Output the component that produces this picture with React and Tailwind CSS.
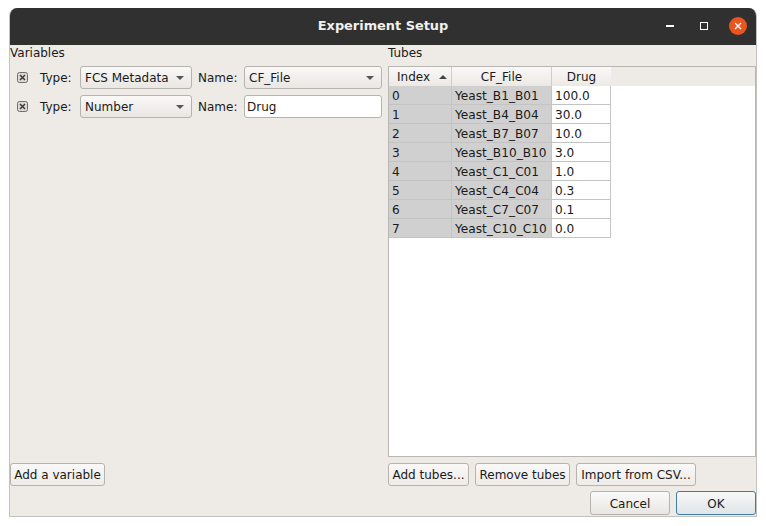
import React from "react";

const font = { fontFamily: '"DejaVu Sans", sans-serif' };

function Arrow() {
  return <span className="ml-auto mr-[6px] h-0 w-0 border-x-[4px] border-t-[4px] border-x-transparent border-t-[#555]" />;
}

function Combo({ w, children }) {
  return (
    <div className={`flex h-[23px] ${w} shrink-0 items-center rounded-[3px] border border-[#b5b3ae] bg-gradient-to-b from-[#faf9f8] to-[#e9e6e3] pl-[4px] pr-[1px] pt-[1px]`}>
      <span>{children}</span>
      <Arrow />
    </div>
  );
}

function Check() {
  return (
    <svg width="11" height="11" viewBox="0 0 11 11" className="ml-[7px] mr-[12px] shrink-0">
      <rect x="0.5" y="0.5" width="10" height="10" rx="2" fill="#dcdad6" stroke="#6f6d69" />
      <path d="M3 3 L8 8 M8 3 L3 8" stroke="#3a3a3a" strokeWidth="1.5" />
    </svg>
  );
}

function Btn({ w, children }) {
  return (
    <div className={`flex h-[23px] ${w} items-center justify-center rounded-[3px] border border-[#b5b3ae] bg-gradient-to-b from-[#faf9f8] to-[#eeebe8] pt-[1px]`}>
      {children}
    </div>
  );
}

const rows = [
  ["0", "Yeast_B1_B01", "100.0"],
  ["1", "Yeast_B4_B04", "30.0"],
  ["2", "Yeast_B7_B07", "10.0"],
  ["3", "Yeast_B10_B10", "3.0"],
  ["4", "Yeast_C1_C01", "1.0"],
  ["5", "Yeast_C4_C04", "0.3"],
  ["6", "Yeast_C7_C07", "0.1"],
  ["7", "Yeast_C10_C10", "0.0"],
];

function VarRow({ type, name, input }) {
  return (
    <div className="flex h-[23px] items-center">
      <Check />
      <span className="w-[40px] shrink-0 pt-[1px]">Type:</span>
      <Combo w="w-[112px]">{type}</Combo>
      <span className="ml-[6px] w-[46px] shrink-0 pt-[1px]">Name:</span>
      {input ? (
        <div className="flex h-[23px] w-[138px] items-center rounded-[3px] border border-[#b5b3ae] bg-white pl-[2px] pt-[1px]">{name}</div>
      ) : (
        <Combo w="w-[138px]">{name}</Combo>
      )}
    </div>
  );
}

export default function App() {
  return (
    <div className="h-[526px] w-[766px] overflow-hidden bg-white pl-[9px] pt-[8px] text-[12px] leading-none text-[#1a1a1a]" style={font}>
      <div className="flex h-[509px] w-[748px] flex-col overflow-hidden rounded-t-[8px] border-x border-b border-[#c4c2bf] bg-[#eeebe7]">
        <div className="relative flex h-[37px] shrink-0 items-center justify-center bg-[#303030]">
          <span className="text-[12.9px] font-bold text-[#f2f0ec]">Experiment Setup</span>
          <div className="absolute right-[9px] top-[9px] flex items-center">
            <span className="mr-[26px] h-[1.5px] w-[8px] bg-white" />
            <span className="mr-[21px] h-[8px] w-[8px] border border-white" />
            <span className="flex h-[18px] w-[18px] items-center justify-center rounded-full bg-[#e9541f]">
              <svg width="8" height="8" viewBox="0 0 8 8"><path d="M1 1 L7 7 M7 1 L1 7" stroke="#fff" strokeWidth="1.4" /></svg>
            </span>
          </div>
        </div>

        <div className="flex min-h-0 flex-1">
          <div className="flex w-[378px] shrink-0 flex-col">
            <div className="mt-[1px] flex h-[14px] items-center">Variables</div>
            <div className="mt-[6px] flex flex-col gap-[6px]">
              <VarRow type="FCS Metadata" name="CF_File" />
              <VarRow type="Number" name="Drug" input />
            </div>
            <div className="mb-[30px] mt-auto">
              <Btn w="w-[95px]">Add a variable</Btn>
            </div>
          </div>

          <div className="flex w-[368px] shrink-0 flex-col">
            <div className="mt-[1px] flex h-[14px] items-center">Tubes</div>
            <div className="mt-[6px] h-[391px] border border-[#b8b6b2] bg-white">
              <div className="flex h-[19px] bg-[#eeebe7]">
                <div className="flex w-[63px] items-center border-r border-[#cfcdc9] bg-gradient-to-b from-[#faf9f8] to-[#ece9e5] pl-[8px] pt-[1px]">
                  Index
                  <span className="ml-auto mr-[4px] h-0 w-0 border-x-[4px] border-b-[4px] border-x-transparent border-b-[#444]" />
                </div>
                <div className="flex w-[100px] items-center justify-center border-r border-[#cfcdc9] bg-gradient-to-b from-[#faf9f8] to-[#ece9e5] pt-[1px]">CF_File</div>
                <div className="flex w-[59px] items-center justify-center bg-gradient-to-b from-[#faf9f8] to-[#ece9e5] pt-[1px]">Drug</div>
              </div>
              {rows.map(([i, f, d]) => (
                <div key={i} className="flex h-[19px] w-[222px] border-b border-[#c4c4c4] text-[12.15px]">
                  <div className="flex w-[63px] items-center border-r border-[#c4c4c4] bg-[#d0d0d0] pl-[3px] pt-[2px]">{i}</div>
                  <div className="flex w-[100px] items-center border-r border-[#c4c4c4] bg-[#d0d0d0] pl-[3px] pt-[2px]">{f}</div>
                  <div className="flex w-[59px] items-center border-r border-[#c4c4c4] pl-[3px] pt-[2px]">{d}</div>
                </div>
              ))}
            </div>
            <div className="mt-[6px] flex gap-[6px]">
              <Btn w="w-[81px]">Add tubes...</Btn>
              <Btn w="w-[95px]">Remove tubes</Btn>
              <Btn w="w-[120px]">Import from CSV...</Btn>
            </div>
            <div className="mt-[5px] flex justify-end gap-[6px]">
              <div className="flex h-[24px] w-[80px] items-center justify-center rounded-[3px] border border-[#b5b3ae] bg-gradient-to-b from-[#fafafa] to-[#e9e6e3] pt-[1px]">Cancel</div>
              <div className="flex h-[24px] w-[80px] items-center justify-center rounded-[3px] border border-[#3f7da3] bg-gradient-to-b from-[#f8f8f8] to-[#dfe5e8] pt-[1px]">OK</div>
            </div>
          </div>
        </div>
      </div>
    </div>
  );
}
